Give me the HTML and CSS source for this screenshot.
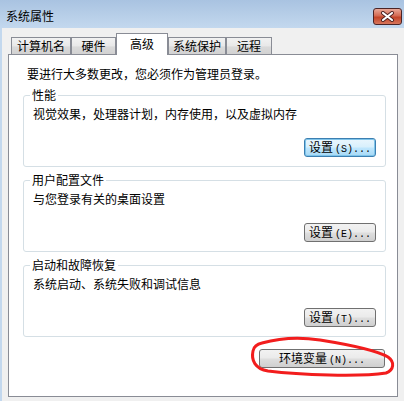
FILE: index.html
```html
<!DOCTYPE html>
<html lang="zh-CN">
<head>
    <meta charset="UTF-8">
    <meta name="viewport" content="width=device-width, initial-scale=1.0">
    <title>系统属性</title>
    <link rel="stylesheet" href="styles.css">
</head>
<body>
    <div class="window">
        <div class="titlebar">
            <span class="title">系统属性</span>
            <div class="close">
                <svg width="15" height="11" viewBox="0 0 15 11">
                    <path d="M3 2 L12 9 M12 2 L3 9" stroke="#4a2020" stroke-width="4" stroke-linecap="round"/>
                    <path d="M3 2 L12 9 M12 2 L3 9" stroke="#fff" stroke-width="2.2" stroke-linecap="round"/>
                </svg>
            </div>
        </div>
        <div class="frame">
            <div class="tabs">
                <div class="tab" style="width:60px">计算机名</div>
                <div class="tab" style="width:45px">硬件</div>
                <div class="tab active" style="width:52px">高级</div>
                <div class="tab" style="width:58px">系统保护</div>
                <div class="tab" style="width:46px">远程</div>
            </div>
            <div class="panel">
                <p class="intro">要进行大多数更改，您必须作为管理员登录。</p>

                <fieldset class="group">
                    <legend>性能</legend>
                    <p class="desc">视觉效果，处理器计划，内存使用，以及虚拟内存</p>
                    <button class="btn focus">设置<span class="key">(S)...</span></button>
                </fieldset>

                <fieldset class="group">
                    <legend>用户配置文件</legend>
                    <p class="desc">与您登录有关的桌面设置</p>
                    <button class="btn">设置<span class="key">(E)...</span></button>
                </fieldset>

                <fieldset class="group">
                    <legend>启动和故障恢复</legend>
                    <p class="desc">系统启动、系统失败和调试信息</p>
                    <button class="btn">设置<span class="key">(T)...</span></button>
                </fieldset>

                <button class="btn env">环境变量<span class="key">(N)...</span></button>
            </div>
        </div>

        <!-- hand drawn mark around the button -->
        <svg class="mark" width="404" height="401" viewBox="0 0 404 401">
            <path d="M262 343 C 280 338 300 337 320 340 C 345 344 376 350 388 357 C 395 362 394 370 386 373 C 360 377 300 375 268 371 C 255 369 251 360 253 351 C 254 346 257 344 262 343"
                  fill="none" stroke="#f21d1d" stroke-width="3" stroke-linecap="round"/>
        </svg>
    </div>
</body>
</html>
```

FILE: styles.css
```css
body {
    margin: 0;
    width: 404px;
    height: 401px;
    overflow: hidden;
    font-family: "Noto Sans CJK SC", sans-serif;
    font-size: 12px;
    color: #000;
    background: #f0f0f0;
}
.window {
    position: relative;
    height: 401px;
    display: flex;
    flex-direction: column;
}
.titlebar {
    height: 28px;
    flex: none;
    display: flex;
    align-items: flex-start;
    justify-content: space-between;
    padding-left: 6px;
    background: linear-gradient(#a9c3e1, #c3d8ee);
}
.title {
    margin-top: 9px;
    line-height: 14px;
}
.close {
    margin-top: 8px;
    margin-right: 2px;
    width: 27px;
    height: 15px;
    border: 1px solid #4b2426;
    border-radius: 3px;
    background: linear-gradient(#e9a898, #d46a52 45%, #c34428 55%, #d7765c);
    display: flex;
    align-items: center;
    justify-content: center;
}
.frame {
    flex: 1;
    display: flex;
    flex-direction: column;
    border-left: 2px solid #c3d8ee;
    padding: 5px 6px 4px 6px;
}
.tabs {
    display: flex;
    align-items: flex-end;
    height: 21px;
    padding-left: 3px;
}
.tab {
    box-sizing: border-box;
    height: 17px;
    border: 1px solid #898c95;
    border-bottom: none;
    background: linear-gradient(#f2f2f2, #e8e8e8 50%, #dadada 55%, #d2d2d2);
    text-align: center;
    line-height: 16px;
}
.tab.active {
    height: 22px;
    margin-bottom: -1px;
    background: #fff;
    position: relative;
    z-index: 1;
    line-height: 20px;
}
.panel {
    flex: 1;
    display: flex;
    flex-direction: column;
    background: #fff;
    border: 1px solid #898c95;
    padding: 11px 11px 0 14px;
}
.intro {
    margin: 0;
    padding-left: 4px;
    line-height: 16px;
}
.group {
    margin: 6px 0 0 0;
    padding: 0 9px 9px 9px;
    border: 1px solid #d5dfe5;
    border-radius: 3px;
    display: flex;
    flex-direction: column;
    min-width: 0;
}
.group + .group {
    margin-top: 6px;
}
.group legend {
    margin-left: -3px;
    padding: 0 2px;
    line-height: 14px;
}
.desc {
    margin: 0;
    padding-top: 4px;
    line-height: 16px;
}
.btn {
    box-sizing: border-box;
    align-self: flex-end;
    margin-top: 16px;
    width: 72px;
    height: 19px;
    padding: 0;
    border: 1px solid #707070;
    border-radius: 3px;
    background: linear-gradient(#f2f2f2, #ebebeb 45%, #dddddd 55%, #cfcfcf);
    font-family: "Noto Sans CJK SC", sans-serif;
    font-size: 12px;
    line-height: 16px;
    color: #000;
}
.btn.focus {
    border-color: #3c7fb1;
    background: linear-gradient(#eaf6fd, #d9f0fc 45%, #bee6fd 55%, #a7d9f5);
    box-shadow: inset 0 0 0 1px #7ec4ea;
}
.key {
    font-family: "Liberation Mono", monospace;
    font-size: 10px;
    margin-left: 2px;
}
.btn.env {
    width: 126px;
    margin-top: 12px;
    margin-right: 1px;
}
.mark {
    position: absolute;
    top: 0;
    left: 0;
    pointer-events: none;
}
```
